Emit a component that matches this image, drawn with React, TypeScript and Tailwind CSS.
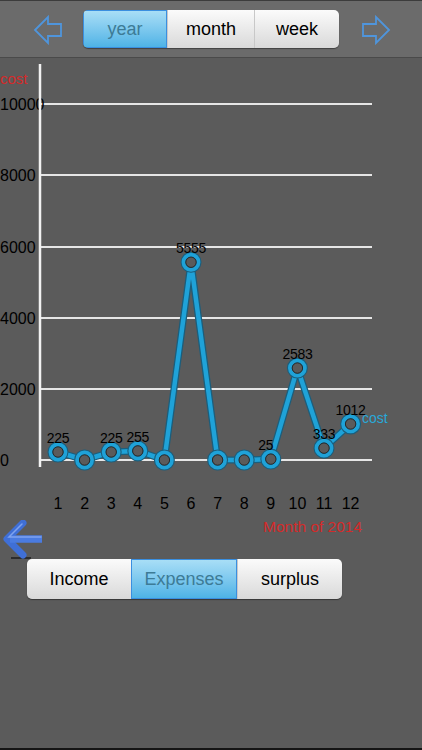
import React from 'react'

const values = [225, 0, 225, 255, 0, 5555, 0, 0, 25, 2583, 333, 1012]
const labels = ['225', '', '225', '255', '', '5555', '', '', '25', '2583', '333', '1012']
const gridY = [46, 117, 189, 260, 331, 402]
const yTicks = ['10000', '8000', '6000', '4000', '2000', '0']

const px = (i: number) => 58 + i * 26.6
const py = (v: number) => 402 - v * 0.0356

function OutlineArrow({ dir }: { dir: 'left' | 'right' }) {
  return (
    <svg width="30" height="30" viewBox="0 0 30 30" className={dir === 'right' ? 'scale-x-[-1]' : ''}>
      <path d="M2 15 L15 2 L15 9 L28 9 L28 21 L15 21 L15 28 Z" fill="none" stroke="#4f95dc" strokeWidth="1.8" strokeLinejoin="miter" />
    </svg>
  )
}

function Segment({ items, active, w, h }: { items: string[]; active: number; w: number[]; h: string }) {
  return (
    <div className={`inline-flex ${h} rounded-[5px] overflow-hidden shadow-[0_1px_1px_rgba(0,0,0,0.4)]`}>
      {items.map((t, i) => (
        <div
          key={t}
          style={{ width: w[i] }}
          className={
            i === active
              ? 'flex items-center justify-center bg-gradient-to-b from-[#a8def6] to-[#4db3e6] text-[#3d7b96] border border-[#3a8fe0]'
              : 'flex items-center justify-center bg-gradient-to-b from-[#fbfbfb] to-[#d9d9d9] text-black border-l border-[#c8c8c8] first:border-l-0'
          }
        >
          {t}
        </div>
      ))}
    </div>
  )
}

export default function App() {
  const pts = values.map((v, i) => `${px(i)},${py(v)}`).join(' ')
  return (
    <div className="w-[422px] h-[750px] bg-[#5b5b5b] flex flex-col" style={{ fontFamily: '"Liberation Sans", Arial, sans-serif' }}>
      <header className="h-[58px] bg-[#6b6b6b] border-t border-[#3c3c3c] border-b border-b-[#4a4a4a] flex items-center">
        <div className="ml-[33px] mt-[1px]"><OutlineArrow dir="left" /></div>
        <div className="ml-[20px] flex">
          <Segment items={['year', 'month', 'week']} active={0} w={[84, 87, 85]} h="h-[38px] text-[18px]" />
        </div>
        <div className="ml-[22px] mt-[1px]"><OutlineArrow dir="right" /></div>
      </header>

      <svg width="422" height="462" className="block" style={{ fontFamily: '"Liberation Sans", Arial, sans-serif' }}>
        <text x="0" y="26" fill="#d42a2a" fontSize="15">cost</text>
        {gridY.map((y) => (
          <line key={y} x1="41" x2="372" y1={y} y2={y} stroke="#e6e6e6" strokeWidth="2" />
        ))}
        {yTicks.map((t, i) => (
          <text key={t} x="0" y={gridY[i] + 6} fill="#000" fontSize="16">{t}</text>
        ))}
        <line x1="40" x2="40" y1="6" y2="409" stroke="#f2f2f2" strokeWidth="2.5" />
        <polyline points={pts} fill="none" stroke="#1b5e7c" strokeWidth="7" strokeLinejoin="round" />
        <polyline points={pts} fill="none" stroke="#1fa2d8" strokeWidth="4.5" strokeLinejoin="round" />
        {values.map((v, i) => (
          <g key={i}>
            <circle cx={px(i)} cy={py(v)} r="7.5" fill="#5b5b5b" stroke="#1b5e7c" strokeWidth="6" />
            <circle cx={px(i)} cy={py(v)} r="7.5" fill="none" stroke="#1fa2d8" strokeWidth="3.8" />
            <circle cx={px(i)} cy={py(v)} r="5.2" fill="#5b5b5b" stroke="#1e1e1e" strokeWidth="0.8" />
          </g>
        ))}
        {values.map((v, i) =>
          labels[i] ? (
            <text key={'l' + i} x={i === 8 ? px(i) - 5 : px(i)} y={py(v) - 9} textAnchor="middle" fill="#000" fontSize="14" letterSpacing="-0.3">{labels[i]}</text>
          ) : null
        )}
        <text x="362" y="365" fill="#29a8d8" fontSize="14">cost</text>
        {values.map((_, i) => (
          <text key={'x' + i} x={px(i)} y="451" textAnchor="middle" fill="#000" fontSize="16">{i + 1}</text>
        ))}
      </svg>

      <div className="h-[39px] flex items-start">
        <svg width="44" height="39" className="ml-[1px]">
          <line x1="10" y1="38" x2="30" y2="38" stroke="#2c2c2c" strokeWidth="2" />
          <path d="M22 3 L6 19 L22 35" fill="none" stroke="#3f6fd6" strokeWidth="7" strokeLinecap="round" strokeLinejoin="round" />
          <line x1="9" y1="19" x2="41" y2="19" stroke="#4a7be0" strokeWidth="7.5" />
          <path d="M21 4 L8 17 L40 17" fill="none" stroke="#7fa3ee" strokeWidth="1.5" strokeLinecap="round" />
        </svg>
        <span className="ml-[218px] -mt-[1px] text-[15.5px] text-[#d42a2a] leading-none">Month of 2014</span>
      </div>

      <div className="ml-[27px] flex">
        <Segment items={['Income', 'Expenses', 'surplus']} active={1} w={[104, 106, 105]} h="h-[40px] text-[18px]" />
      </div>

      <div className="flex-1" />
      <div className="h-[2px] bg-[#151515]" />
    </div>
  )
}
